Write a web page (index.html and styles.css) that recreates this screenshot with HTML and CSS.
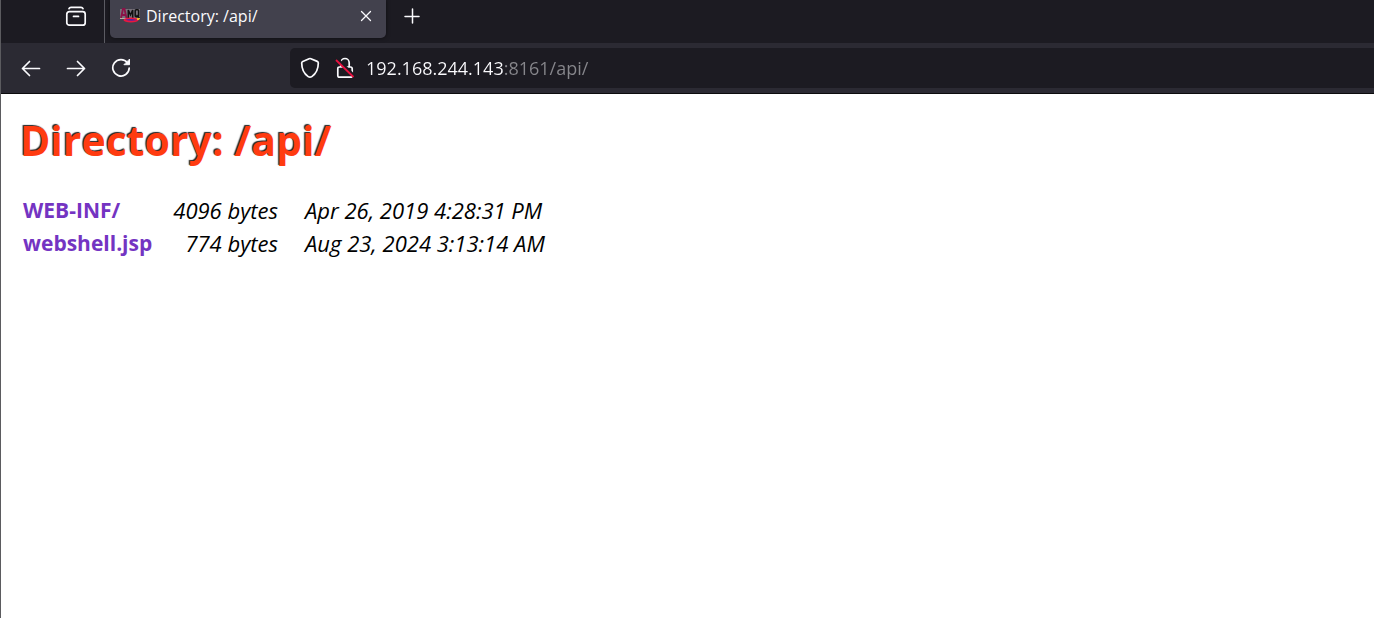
FILE: index.html
```html
<!DOCTYPE html>
<html lang="en">
<head>
<meta charset="utf-8">
<title>Directory: /api/</title>
<link rel="stylesheet" href="styles.css">
</head>
<body>
<div class="window">
  <header class="tab-strip">
    <div class="strip-start">
      <button class="icon-button" aria-label="Recent browsing">
        <svg width="22" height="22" viewBox="0 0 22 22" fill="none" stroke="#fbfbfe" stroke-width="1.7" stroke-linecap="round"><path d="M4 2.6C4.400 1.700 5 1.400 6 1.400h10c1 0 1.600.3 2 1.200"/><rect x="1.800" y="5.700" width="18.400" height="13.500" rx="2.500"/><path d="M8.500 10.400h5"/></svg>
      </button>
    </div>
    <div class="tab">
      <svg class="favicon" width="20" height="20" viewBox="0 0 20 20"><path d="M0 3h20v9H0z" fill="#77717a"/><path d="M1 12 3 3h1.500l2 9M2.500 9h3" fill="none" stroke="#8b1247" stroke-width="1.800"/><path d="M8.300 12V4l2.200 5 2.200-5v8" fill="none" stroke="#111" stroke-width="1.500"/><rect x="15.200" y="3.800" width="3.400" height="7" rx="1" fill="none" stroke="#111" stroke-width="1.500"/><path d="m16.500 9 3 3" stroke="#111" stroke-width="1.500"/><path d="M0 12.500h20" stroke="#b9aaa5"/><ellipse cx="11" cy="14" rx="7.500" ry="2.500" fill="#e9183e"/><path d="M5 13.700q6-1.600 12 .3-6 1.500-12-.3" fill="#4b22a8"/><path d="M17 12h3l-1 2h-2z" fill="#f2b62d"/></svg>
      <span class="tab-title">Directory: /api/</span>
      <button class="icon-button" aria-label="Close tab">
        <svg width="12" height="12" viewBox="0 0 12 12" stroke="#fbfbfe" stroke-width="1.300" stroke-linecap="round"><path d="m1.500 1.500 9 9m0-9-9 9"/></svg>
      </button>
    </div>
    <button class="icon-button new-tab" aria-label="New tab">
      <svg width="16" height="16" viewBox="0 0 16 16" stroke="#fbfbfe" stroke-width="1.500" stroke-linecap="round"><path d="M8.500 1v14M1 8.500h14"/></svg>
    </button>
  </header>
  <nav class="toolbar" aria-label="Navigation">
    <div class="nav-buttons">
      <button class="icon-button" aria-label="Back">
        <svg width="20" height="20" viewBox="0 0 20 20" fill="none" stroke="#fbfbfe" stroke-width="1.700" stroke-linecap="round" stroke-linejoin="round"><path d="M18.500 10.500h-17M8.500 3.500l-7 7 7 7"/></svg>
      </button>
      <button class="icon-button" aria-label="Forward">
        <svg width="20" height="20" viewBox="0 0 20 20" fill="none" stroke="#fbfbfe" stroke-width="1.700" stroke-linecap="round" stroke-linejoin="round"><path d="M1.500 10.500h17M11.500 3.500l7 7-7 7"/></svg>
      </button>
      <button class="icon-button" aria-label="Reload">
        <svg width="20" height="20" viewBox="0 0 20 20" fill="none" stroke="#fbfbfe" stroke-width="1.700" stroke-linecap="round"><path d="M16.500 4.800A8.200 8.200 0 1 0 18.200 10"/><path d="M18.500 1.500v5.200h-5.200z" fill="#fbfbfe" stroke-width="1" stroke-linejoin="round"/></svg>
      </button>
    </div>
    <div class="url-bar">
      <button class="icon-button" aria-label="Tracking protection">
        <svg width="20" height="22" viewBox="0 0 20 22" fill="none" stroke="#fbfbfe" stroke-width="1.700" stroke-linejoin="round"><path d="M9.100 1.700q.9-.4 1.800 0l6.300 2.700q1.100.5 1.100 1.700c0 6-2.300 10.700-6.500 13.500q-1.800 1.200-3.600 0C4 16.800 1.700 12.100 1.700 6.100q0-1.200 1.100-1.700z"/></svg>
      </button>
      <button class="icon-button" aria-label="Connection is not secure">
        <svg width="20" height="22" viewBox="0 0 20 22" fill="none"><path d="M5.800 10V5.700a4.200 4.200 0 0 1 8.400 0V10M4.500 10h11q1.700 0 1.700 1.700v6.800q0 1.700-1.700 1.700h-11q-1.700 0-1.700-1.700v-6.800Q2.800 10 4.500 10z" stroke="#fbfbfe" stroke-width="1.700"/><path d="m2.500 2.500 16 16" stroke="#1c1b22" stroke-width="3.500"/><path d="m1 3 17.500 17" stroke="#e8103f" stroke-width="1.800"/></svg>
      </button>
      <input class="url-input" type="text" aria-label="Address" value="192.168.244.143:8161/api/" spellcheck="false">
    </div>
  </nav>
  <main class="page">
    <h1 class="title">Directory: /api/</h1>
    <table class="listing">
      <tbody>
        <tr><td class="name"><a href="#web-inf">WEB-INF/</a></td><td class="size">4096 bytes</td><td class="date">Apr 26, 2019 4:28:31 PM</td></tr>
        <tr><td class="name"><a href="#webshell">webshell.jsp</a></td><td class="size">774 bytes</td><td class="date">Aug 23, 2024 3:13:14 AM</td></tr>
      </tbody>
    </table>
  </main>
</div>
</body>
</html>
```
FILE: styles.css
```css
* {
  box-sizing: border-box;
}

body {
  margin: 0;
  background: #fff;
  font-family: "Open Sans", "Noto Sans", sans-serif;
}

.window {
  min-height: 100vh;
  border-left: 1px solid #5b5b5f;
}

.icon-button {
  display: flex;
  padding: 0;
  border: 0;
  background: none;
}

.tab-strip {
  display: flex;
  height: 43px;
  background: #1c1b22;
}

.strip-start {
  display: flex;
  justify-content: flex-end;
  width: 104px;
  padding: 6px 17px 0 0;
  border-right: 1px solid #5b5b62;
}

.tab {
  display: flex;
  align-items: center;
  width: 276px;
  height: 38px;
  margin-left: 5px;
  padding: 0 14px 6px 10px;
  border-radius: 0 0 5px 5px;
  background: #42414d;
  box-shadow: 0 0 4px #0008;
}

.tab-title {
  flex: 1;
  margin-left: 6px;
  color: #fbfbfe;
  font-size: 16px;
  line-height: 20px;
}

.new-tab {
  padding: 8px 0 0 18px;
}

.toolbar {
  display: flex;
  align-items: center;
  height: 51px;
  border-bottom: 1px solid #0c0c0d;
  background: #2b2a33;
}

.nav-buttons {
  display: flex;
  gap: 25px;
  width: 289px;
  padding-left: 20px;
}

.url-bar {
  display: flex;
  flex: 1;
  align-items: center;
  gap: 15px;
  height: 40px;
  padding-left: 10px;
  border-radius: 5px 0 0 5px;
  background: #1c1b22;
}

.url-input {
  flex: 1;
  margin-left: -4px;
  padding: 0;
  border: 0;
  outline: 0;
  background: linear-gradient(90deg, #fbfbfe 138px, #87878c 138px);
  background-clip: text;
  color: transparent;
  font: 18px/24px "Open Sans", "Noto Sans", sans-serif;
}

.page {
  padding: 16px 19px;
}

.title {
  margin: 0;
  color: #ff3b10;
  font-size: 41px;
  line-height: 60px;
  text-shadow: -1px -1px 1px #222;
}

.listing {
  margin-top: 24px;
  border-spacing: 0;
  font-size: 22px;
  line-height: 33px;
}

.listing td {
  padding: 0 27px 0 0;
  vertical-align: middle;
  white-space: nowrap;
}

.listing .name {
  padding: 0 21px 0 3px;
  font-size: 21px;
}

.name a {
  color: #7434c2;
  font-weight: 700;
  text-decoration: none;
}

.size {
  font-style: italic;
  text-align: right;
}

.date {
  font-style: italic;
}
```
